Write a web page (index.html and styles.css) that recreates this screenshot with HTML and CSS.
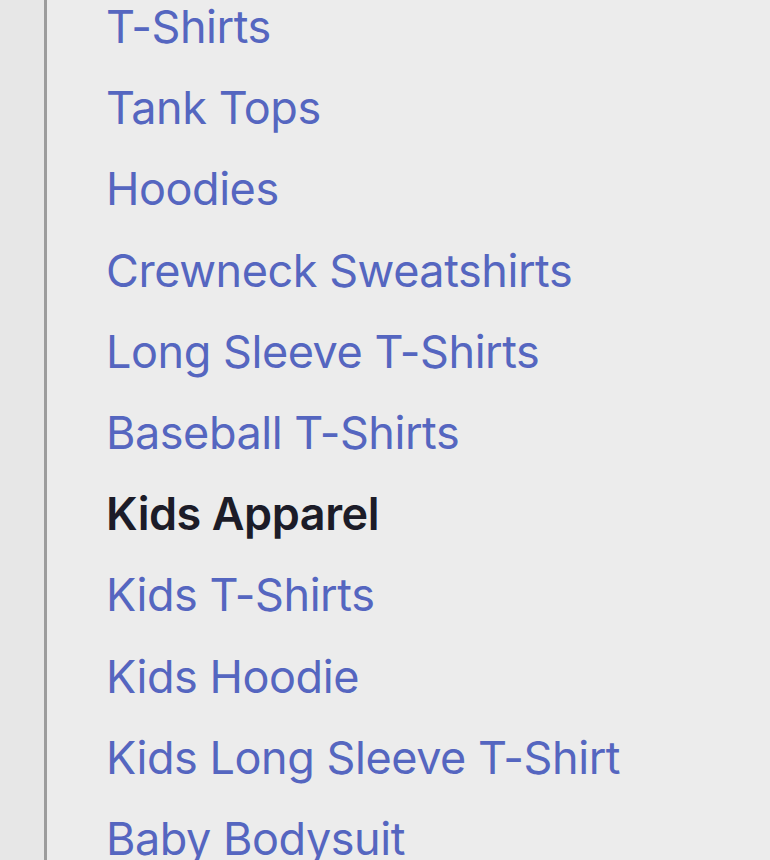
FILE: index.html
```html
<!DOCTYPE html>
<html>
<head>
<meta charset="utf-8">
<link rel="stylesheet" href="styles.css">
</head>
<body>
<div class="page">
  <div class="rail"></div>
  <div class="panel">
    <ul class="menu">
      <li><a class="link">T-Shirts</a></li>
      <li><a class="link">Tank Tops</a></li>
      <li><a class="link">Hoodies</a></li>
      <li><a class="link">Crewneck Sweatshirts</a></li>
      <li><a class="link">Long Sleeve T-Shirts</a></li>
      <li><a class="link">Baseball T-Shirts</a></li>
      <li class="heading">Kids Apparel</li>
      <li><a class="link">Kids T-Shirts</a></li>
      <li><a class="link">Kids Hoodie</a></li>
      <li><a class="link">Kids Long Sleeve T-Shirt</a></li>
      <li><a class="link">Baby Bodysuit</a></li>
    </ul>
  </div>
</div>
</body>
</html>
```
FILE: styles.css
```css
html, body {
  margin: 0;
  padding: 0;
  height: 100%;
  overflow: hidden;
}
body {
  background: #ececec;
  font-family: Inter, "Noto Sans", sans-serif;
}
.page {
  display: flex;
  height: 860px;
}
.rail {
  width: 44px;
  background: #e7e7e7;
  border-right: 3px solid #9c9c9c;
  flex: none;
}
.panel {
  flex: 1;
  padding-left: 59px;
}
.menu {
  list-style: none;
  margin: -14px 0 0 0;
  padding: 0;
}
.menu li {
  font-size: 45px;
  line-height: 81.2px;
  white-space: nowrap;
  letter-spacing: -0.45px;
}
.link {
  color: #5566c0;
}
.heading {
  color: #1c1c28;
  font-weight: 600;
  letter-spacing: -1.5px;
}
```
